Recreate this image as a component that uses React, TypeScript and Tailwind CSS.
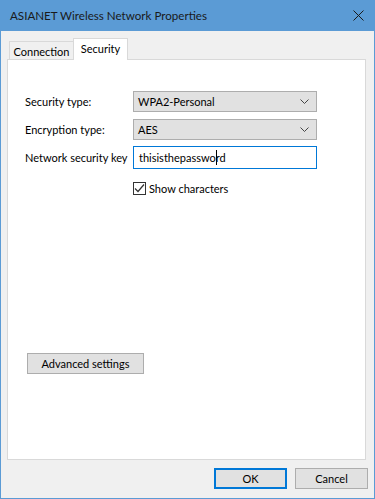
function Select({ value }: { value: string }) {
  return (
    <div className="h-[21px] w-[184px] border border-[#adadad] bg-[#e1e1e1] flex items-center justify-between pl-[4px] pr-[7px]">
      <span>{value}</span>
      <svg width="9" height="5" viewBox="0 0 9 5" className="text-[#444]">
        <polyline points="0.5,0.5 4.5,4.5 8.5,0.5" fill="none" stroke="currentColor" strokeWidth="1" />
      </svg>
    </div>
  );
}

function Button({ label, primary, className = '' }: { label: string; primary?: boolean; className?: string }) {
  return (
    <button
      className={`h-[21px] bg-[#e1e1e1] flex items-center justify-center ${
        primary ? 'border-2 border-[#0078d7]' : 'border border-[#adadad]'
      } ${className}`}
    >
      {label}
    </button>
  );
}

export default function App() {
  return (
    <div className="w-[375px] h-[499px] flex flex-col bg-[#5b9bd5] text-[11px] leading-[15px] text-black whitespace-nowrap font-[family-name:Lato,sans-serif]">
      {/* Title bar */}
      <div className="h-[31px] shrink-0 flex items-center justify-between pl-[10px] pr-[11px] text-[#1a1a1a]">
        <span className="text-[11.6px]">ASIANET Wireless Network Properties</span>
        <svg width="11" height="11" viewBox="0 0 11 11">
          <path d="M0.5 0.5 L10.5 10.5 M10.5 0.5 L0.5 10.5" stroke="#1a1a1a" strokeWidth="1" />
        </svg>
      </div>

      {/* Body */}
      <div className="flex-1 mx-[1px] mb-[1px] bg-[#f0f0f0] flex flex-col pl-[6px] pr-[7px] pt-[7px]">
        {/* Tabs */}
        <div className="flex items-end h-[21px] pl-[2px]">
          <div className="w-[64px] h-[18px] pt-[1px] flex items-center justify-center border border-b-0 border-r-0 border-[#d9d9d9] bg-[#f0f0f0] leading-none">
            Connection
          </div>
          <div className="relative z-10 w-[55px] h-[22px] -mb-[1px] pb-[3px] flex items-center justify-center border border-b-0 border-[#d9d9d9] bg-white leading-none">
            Security
          </div>
        </div>

        {/* Panel */}
        <div className="h-[401px] w-[359px] border border-[#d9d9d9] bg-white flex flex-col pl-[17px] pt-[31px]">
          <div className="flex items-center">
            <span className="w-[108px]">Security type:</span>
            <Select value="WPA2-Personal" />
          </div>
          <div className="flex items-center mt-[7px]">
            <span className="w-[108px]">Encryption type:</span>
            <Select value="AES" />
          </div>
          <div className="flex items-center mt-[6px]">
            <span className="w-[108px]">Network security key</span>
            <div className="h-[23px] w-[184px] border border-[#0078d7] bg-white flex items-center pl-[5px]">
              <span>thisisthepasswo</span>
              <span className="inline-block w-[1px] h-[15px] bg-black -mr-[1px]" />
              <span>rd</span>
            </div>
          </div>
          <div className="flex items-center mt-[12px] ml-[108px] gap-[3px]">
            <div className="w-[13px] h-[13px] border border-[#333] bg-white flex items-center justify-center">
              <svg width="11" height="11" viewBox="0 0 11 11">
                <polyline points="1,5.5 4,8.5 10,1.5" fill="none" stroke="#333" strokeWidth="1.2" />
              </svg>
            </div>
            <span>Show characters</span>
          </div>
          <div className="mt-[157px] pl-[2px]">
            <Button label="Advanced settings" className="w-[117px]" />
          </div>
        </div>

        {/* Footer */}
        <div className="flex justify-end gap-[8px] pt-[8px] -mr-[1px]">
          <Button label="OK" primary className="w-[73px]" />
          <Button label="Cancel" className="w-[73px]" />
        </div>
      </div>
    </div>
  );
}
